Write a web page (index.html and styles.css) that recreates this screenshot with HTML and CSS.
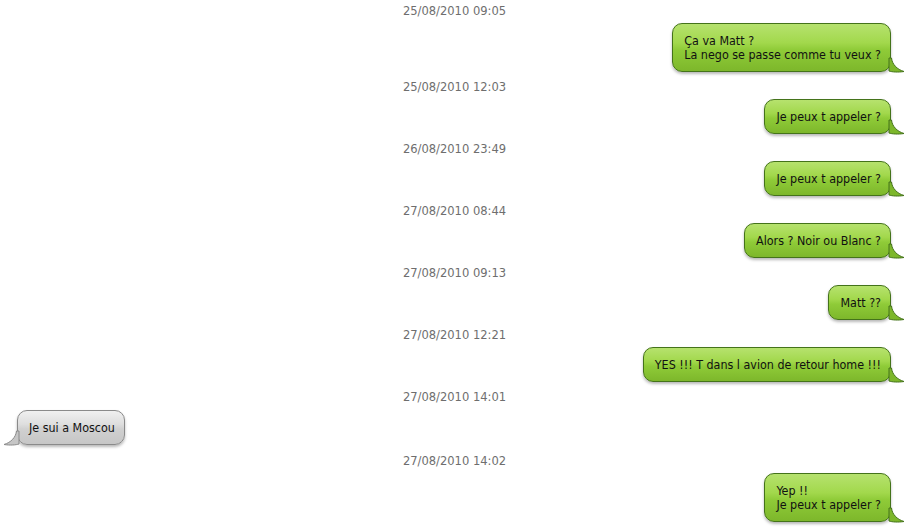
FILE: index.html
```html
<!DOCTYPE html>
<html>
<head>
<meta charset="utf-8">
<link rel="stylesheet" href="styles.css">
</head>
<body>
<div class="thread">
  <div class="msg">
    <div class="time">25/08/2010 09:05</div>
    <div class="row out"><div class="bubble green">Ça va Matt ?<br>La nego se passe comme tu veux ?<svg class="tail" viewBox="0 0 16 15" width="16" height="15"><path d="M0 0 L2.5 0 C3 6 8 11.5 15 13.5 C9 14.5 3 14 0 13 Z"/></svg></div></div>
  </div>
  <div class="msg">
    <div class="time">25/08/2010 12:03</div>
    <div class="row out"><div class="bubble green">Je peux t appeler ?<svg class="tail" viewBox="0 0 16 15" width="16" height="15"><path d="M0 0 L2.5 0 C3 6 8 11.5 15 13.5 C9 14.5 3 14 0 13 Z"/></svg></div></div>
  </div>
  <div class="msg">
    <div class="time">26/08/2010 23:49</div>
    <div class="row out"><div class="bubble green">Je peux t appeler ?<svg class="tail" viewBox="0 0 16 15" width="16" height="15"><path d="M0 0 L2.5 0 C3 6 8 11.5 15 13.5 C9 14.5 3 14 0 13 Z"/></svg></div></div>
  </div>
  <div class="msg">
    <div class="time">27/08/2010 08:44</div>
    <div class="row out"><div class="bubble green">Alors ? Noir ou Blanc ?<svg class="tail" viewBox="0 0 16 15" width="16" height="15"><path d="M0 0 L2.5 0 C3 6 8 11.5 15 13.5 C9 14.5 3 14 0 13 Z"/></svg></div></div>
  </div>
  <div class="msg">
    <div class="time">27/08/2010 09:13</div>
    <div class="row out"><div class="bubble green">Matt ??<svg class="tail" viewBox="0 0 16 15" width="16" height="15"><path d="M0 0 L2.5 0 C3 6 8 11.5 15 13.5 C9 14.5 3 14 0 13 Z"/></svg></div></div>
  </div>
  <div class="msg">
    <div class="time">27/08/2010 12:21</div>
    <div class="row out"><div class="bubble green">YES !!! T dans l avion de retour home !!!<svg class="tail" viewBox="0 0 16 15" width="16" height="15"><path d="M0 0 L2.5 0 C3 6 8 11.5 15 13.5 C9 14.5 3 14 0 13 Z"/></svg></div></div>
  </div>
  <div class="msg">
    <div class="time">27/08/2010 14:01</div>
    <div class="row in"><div class="bubble gray">Je sui a Moscou<svg class="tail" viewBox="0 0 16 15" width="16" height="15"><path d="M0 0 L2.5 0 C3 6 8 11.5 15 13.5 C9 14.5 3 14 0 13 Z"/></svg></div></div>
  </div>
  <div class="msg">
    <div class="time">27/08/2010 14:02</div>
    <div class="row out"><div class="bubble green">Yep !!<br>Je peux t appeler ?<svg class="tail" viewBox="0 0 16 15" width="16" height="15"><path d="M0 0 L2.5 0 C3 6 8 11.5 15 13.5 C9 14.5 3 14 0 13 Z"/></svg></div></div>
  </div>
</div>
</body>
</html>
```
FILE: styles.css
```css
html, body {
  margin: 0;
  padding: 0;
  background: #ffffff;
}
body {
  font-family: "DejaVu Sans Condensed", "DejaVu Sans", sans-serif;
  font-stretch: condensed;
  font-size: 12.4px;
}
.thread {
  display: flex;
  flex-direction: column;
  padding-top: 3px;
}
.msg {
  display: flex;
  flex-direction: column;
}
.time {
  text-align: center;
  color: #6e6e6e;
  font-size: 12.8px;
  line-height: 16px;
  height: 16px;
}
.row {
  display: flex;
  margin: 4px 0 7px;
}
.row.out {
  justify-content: flex-end;
  padding-right: 18px;
}
.row.in {
  justify-content: flex-start;
  padding-left: 17px;
  margin-top: 5px;
  margin-bottom: 8px;
}
.bubble {
  position: relative;
  line-height: 14px;
  padding: 10px 9px 9px 11px;
  border-radius: 10px;
  color: #111;
  box-shadow: 0 2px 3px rgba(0, 0, 0, 0.28);
}
.bubble.green {
  border: 1px solid #44731a;
  background: linear-gradient(to bottom, #b6e26e 0%, #a2d84c 40%, #8fcb38 55%, #7db72b 100%);
}
.bubble.gray {
  border: 1px solid #8a8a8a;
  background: linear-gradient(to bottom, #f0f0f0 0%, #dedede 40%, #d0d0d0 55%, #c6c6c6 100%);
}
.tail {
  position: absolute;
  bottom: -2px;
  overflow: visible;
}
.green .tail {
  right: -15px;
}
.green .tail path {
  fill: #7db72b;
  stroke: #44731a;
  stroke-width: 1;
}
.gray .tail {
  left: -15px;
  transform: scaleX(-1);
}
.gray .tail path {
  fill: #c6c6c6;
  stroke: #8a8a8a;
  stroke-width: 1;
}
```
